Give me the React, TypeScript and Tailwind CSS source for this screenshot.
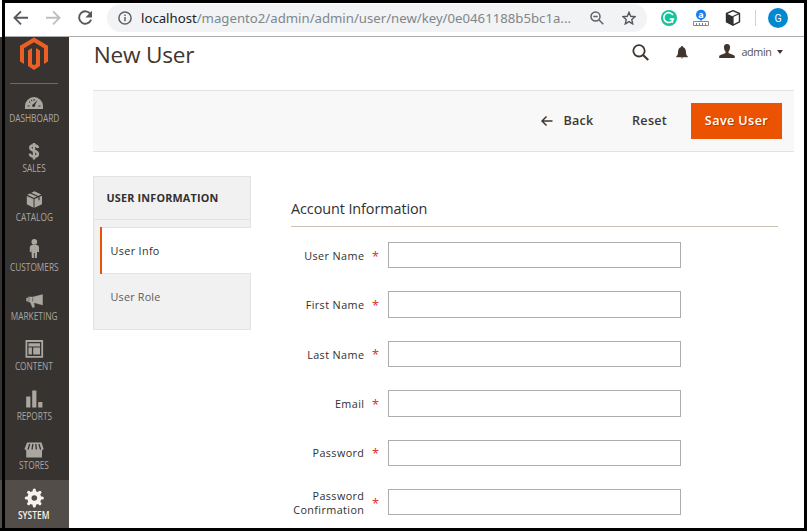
import type { ReactNode } from "react";

const sidebarItems: { label: string; icon: ReactNode; active?: boolean }[] = [
  {
    label: "DASHBOARD",
    icon: (
      <>
        <path d="M3 17v-3a9 9 0 0 1 18 0v3z" />
        <path d="M5.500 14h2M16.500 14h2M7 9.500l1.300 1.200M12 7v1.800M9.300 7.800l.6 1.400" stroke="#373330" strokeWidth="1" />
        <path d="M15.500 8l-4.500 4.500 1.500 1.500z" fill="#373330" />
        <circle cx="11.600" cy="13.500" r="1.500" fill="#373330" />
      </>
    ),
  },
  {
    label: "SALES",
    icon: (
      <path
        d="M16 6C15.600 3.900 14 3.300 12 3.300c-2.300 0-3.700.9-3.700 2.500 0 4.200 7.600 1.700 7.600 6.200 0 1.700-1.500 2.700-3.900 2.700-2.600 0-4-.9-4.200-3M12 1v16.400"
        fill="none"
        stroke="currentColor"
        strokeWidth="2.500"
      />
    ),
  },
  {
    label: "CATALOG",
    icon: (
      <>
        <path d="M4.800 4.900l6.700 3.100v8.700l-6.700-3.500zM12.500 8l7.500-3.300v8.600l-7.500 3.400zM5.300 3.700L8 2.500l6.900 3-2.900 1.400zM9.300 1.800L12.500.2l6.800 3.300-3.100 1.400z" />
        <path d="M17 6v3.300" stroke="#373330" strokeWidth="1.200" />
      </>
    ),
  },
  {
    label: "CUSTOMERS",
    icon: (
      <>
        <circle cx="12.300" cy="0.900" r="2.800" />
        <path d="M10 4.100h5q2 .4 2 2.200v4.800h-1.700V8l-.5 9h-2v-5h-.9v5h-2l-.6-9v3.100H7.800V6.300q0-1.800 2.200-2.200z" />
      </>
    ),
  },
  {
    label: "MARKETING",
    icon: (
      <path d="M21 2.900v11.700l-8.600-2.400.6 4.400-2.700.5-2.300-5.500H5.800v-1.200H4V6.700h1.800V5.500H11zM6.900 6.400v4M10.700 6.400v4" stroke="#373330" strokeWidth=".5" />
    ),
  },
  {
    label: "CONTENT",
    icon: (
      <>
        <path d="M4.400 1h15.800v15.800H4.400z" fill="none" stroke="currentColor" strokeWidth="1.800" />
        <path d="M6.500 3.200H18v3.200H6.500zM6.500 7.600h3.400v7H6.500zM11.200 7.600H18v7h-6.800z" />
      </>
    ),
  },
  { label: "REPORTS", icon: <path d="M4.200 6.500h4.200v11H4.200zM10.200.5h4.200v17h-4.200zM16.200 12h4.200v5.500h-4.200z" /> },
  {
    label: "STORES",
    icon: (
      <>
        <path d="M5 3.500h14.500l2.200 6.500-1.700 1.500v7H4.200v-7L2.500 10z" />
        <path d="M7.700 5L6 10.500M10.800 5l-.7 5.500M13.800 5l.6 5.500M16.900 5l1.700 5.500" stroke="#373330" strokeWidth="1.300" />
      </>
    ),
  },
  {
    label: "SYSTEM",
    active: true,
    icon: (
      <>
        <circle cx="12.300" cy="9" r="4.800" fill="none" stroke="currentColor" strokeWidth="4.400" />
        <path
          d="M12.300 1v16M4.300 9h16M6.700 3.400l11.200 11.200M17.900 3.400L6.700 14.600"
          stroke="currentColor"
          strokeWidth="3.200"
          strokeLinecap="round"
        />
        <circle cx="12.300" cy="9" r="2.800" fill="#524d49" />
      </>
    ),
  },
];

const fields = ["User Name", "First Name", "Last Name", "Email", "Password", "Password Confirmation"];

function BrowserBar() {
  return (
    <div className="flex h-[34px] shrink-0 items-start border-b border-[#adadad] bg-white">
      <svg className="h-[33px] w-[102px] shrink-0" viewBox="5 3 102 33" fill="none" strokeWidth="1.900">
        <path d="M28 17.800H15M21 11.300l-6.500 6.500 6.500 6.500" stroke="#55585c" />
        <path d="M46 17.800h13M53 11.300l6.500 6.500-6.500 6.500" stroke="#bcbec0" />
        <path d="M90.500 14.100a6.200 6.200 0 1 0 .6 5.600" stroke="#55585c" />
        <path d="M92 10.800v6.600h-6.600z" fill="#55585c" />
      </svg>
      <div className="mt-px flex h-7 w-[540px] shrink-0 items-center rounded-full bg-[#f1f3f4]">
        <svg className="ml-[11px] size-[14px] shrink-0" viewBox="0 0 14 14" fill="none" stroke="#5f6368" strokeWidth="1.500">
          <circle cx="7" cy="7" r="6.100" />
          <path d="M7 6v4.300M7 3.500v1.500" />
        </svg>
        <span className="ml-[9px] w-[440px] whitespace-nowrap font-['Noto_Sans',sans-serif] text-[13.200px] leading-7 text-[#80868b]">
          <span className="text-[#202124]">localhost</span>/magento2/admin/admin/user/new/key/0e0461188b5bc1a...
        </span>
        <svg className="ml-[9px] size-[14px] shrink-0" viewBox="0 0 14 14" fill="none" stroke="#5f6368" strokeWidth="1.500">
          <circle cx="5.500" cy="5.500" r="4.500" />
          <path d="M8.800 8.800L13.300 13.300M3.300 5.500h4.400" />
        </svg>
        <svg className="ml-[18px] size-[14px] shrink-0" viewBox="0 0 14 14" fill="none" stroke="#55585c" strokeWidth="1.400">
          <path d="M7 1.300l1.700 4 4.300.4-3.200 2.900.9 4.300L7 10.600l-3.700 2.300.9-4.300L1 5.700l4.300-.4z" />
        </svg>
      </div>
      <svg className="h-[33px] w-[157px] shrink-0" viewBox="647 3 157 33" fill="none">
        <circle cx="669" cy="18" r="8" fill="#15c39a" />
        <path d="M673 15.200a4.900 4.900 0 1 0 .4 3.800h-3.700" stroke="#fff" strokeWidth="1.600" />
        <path d="M672.500 18.800v4" stroke="#fff" strokeWidth="1.400" />
        <circle cx="701" cy="14.800" r="5" fill="#1a7cf0" />
        <path d="M699.300 18.500h3.400L701 21.200z" fill="#1a7cf0" />
        <text x="701" y="17.600" textAnchor="middle" fontSize="9" fontWeight="700" fill="#fff" fontFamily="Open Sans">a</text>
        <path d="M693.500 21.500h15v4h-15zM696.500 23v2M699.500 23v2M702.500 23v2M705.500 23v2" stroke="#85888b" strokeWidth="1" />
        <path d="M733 10.700l6.500 2.800v8.400L733 25.200l-6.500-3.300v-8.400z" fill="#fff" stroke="#303030" strokeWidth="1.400" strokeLinejoin="round" />
        <path d="M726.500 13.500L733 16.500v8.700l-6.500-3.300z" fill="#303030" />
        <path d="M733 16.500l6.500-3M733 16.500v8.700" stroke="#303030" strokeWidth="1.200" />
        <path d="M755.500 10v16" stroke="#cfd1d4" />
        <circle cx="778" cy="18" r="10" fill="#0288d1" />
        <text x="778" y="21.800" textAnchor="middle" fontSize="10.500" fill="#fff" fontFamily="Roboto">G</text>
      </svg>
    </div>
  );
}

function Sidebar() {
  return (
    <nav className="flex w-16 shrink-0 flex-col overflow-hidden bg-[#373330]">
      <div className="h-[46.200px] shrink-0">
        <svg className="block h-[34px] w-16" viewBox="5 37 64 34" fill="#eb5f24">
          <path d="M34 37.400l14 8.300v15.900l-4 2.400V48.200l-10-6-10 6V64l-4-2.400V45.700zM28 50.500l4-2.500v16l2 1.200 2-1.200V48l4 2.500v15.600L34 70l-6-3.900z" />
        </svg>
        <div className="ml-[5px] mt-[12px] h-px w-12 bg-[#736963]" />
      </div>
      {sidebarItems.map((item) => (
        <a
          key={item.label}
          className={
            item.active
              ? "flex h-[49.600px] shrink-0 flex-col items-center bg-[#524d49] pt-[9px] text-[#f7f3eb]"
              : "flex h-[49.600px] shrink-0 flex-col items-center pt-[9px] text-[#aaa6a0]"
          }
        >
          <svg className="mr-[6px] h-5 w-6 shrink-0 overflow-visible" viewBox="0 0 24 20" fill="currentColor">
            {item.icon}
          </svg>
          <span
            className={
              item.active
                ? "-mt-[0.200px] mr-[6px] scale-x-[0.840] font-['Open_Sans',sans-serif] text-[10px] font-semibold leading-[12px]"
                : "-mt-[0.200px] mr-[5.500px] scale-x-[0.830] font-['Open_Sans',sans-serif] text-[10px] leading-[12px]"
            }
          >
            {item.label}
          </span>
        </a>
      ))}
    </nav>
  );
}

function PageHeader() {
  return (
    <header className="flex h-[53px] shrink-0 items-start">
      <h1 className="w-[539px] pl-[0.700px] text-[22.600px] leading-[36px] tracking-[-0.200px] text-[#41362f]">New User</h1>
      <svg className="mt-[7px] size-[17px]" viewBox="0 0 17 17" fill="none" stroke="#41362f" strokeWidth="1.800">
        <circle cx="7" cy="6.800" r="5.700" />
        <path d="M11 11l5.300 5" strokeWidth="2.200" />
      </svg>
      <svg className="ml-[27px] mt-[8px] h-[15px] w-3" viewBox="0 0 12 15" fill="#41362f">
        <path d="M5.200 1h1.600v1C9 2.500 10 4.500 10 7.500c0 2 .7 3 1.800 4v.8H.2v-.8C1.300 10.500 2 9.500 2 7.500c0-3 1-5 3.200-5.500zM4.700 12.800h2.600q-1.300 1.500-2.600 0z" />
      </svg>
      <svg className="ml-[31px] mt-[7px] h-[15px] w-4" viewBox="0 0 16 15" fill="#41362f">
        <path d="M8 0c2.600 0 3.300 2 3 4-.2 1.800-.9 3-1.500 3.600V9c2 1.300 6 1.600 6.300 3.500V14H.2v-1.500C.5 10.600 4.500 10.300 6.500 9V7.600C5.900 7 5.200 5.800 5 4c-.3-2 .4-4 3-4z" />
      </svg>
      <span className="ml-[6.500px] mt-[7px] w-[35.500px] whitespace-nowrap text-[10.800px] leading-4 tracking-[-0.400px] text-[#5a5049]">admin</span>
      <svg className="mt-[13px] h-[5px] w-[6px]" viewBox="0 0 6 5" fill="#41362f">
        <path d="M0 0h6L3 4z" />
      </svg>
    </header>
  );
}

function Toolbar() {
  return (
    <div className="flex h-[62px] w-[701px] shrink-0 items-center justify-end border-y border-[#e3e3e3] bg-[#f8f8f8] pr-3 text-[12.600px] font-semibold tracking-[0.250px] text-[#41362f]">
      <svg className="mr-[10.500px] h-3 w-3" viewBox="0 0 12 12" fill="none" stroke="#41362f" strokeWidth="1.500">
        <path d="M11.500 6H1M5.500 1.500L1 6l4.500 4.500" />
      </svg>
      <span>Back</span>
      <span className="ml-[38.500px]">Reset</span>
      <button className="ml-[24px] h-9 w-[91px] bg-[#eb5202] tracking-[0.400px] text-white [text-shadow:1px_1px_0_rgba(0,0,0,0.250)]">
        Save User
      </button>
    </div>
  );
}

function Tabs() {
  return (
    <aside className="flex h-[154px] w-[158px] shrink-0 flex-col border-y border-l border-[#e3e3e3] bg-[#f1f1f1] text-[10.800px] tracking-[0.300px]">
      <div className="h-[43px] shrink-0 border-b border-r border-[#e3e3e3] pl-[12.500px] font-bold leading-[42px] tracking-[0.190px] text-[#303030]">
        USER INFORMATION
      </div>
      <div className="h-[7px] shrink-0 border-r border-[#e3e3e3]" />
      <div className="ml-[6px] flex h-[47px] shrink-0 border-l-2 border-[#eb5202] bg-white">
        <div className="flex-1 border-y border-[#e3e3e3] pl-[8.500px] leading-[45px] tracking-[0.350px] text-[#303030]">User Info</div>
      </div>
      <div className="flex-1 border-r border-[#e3e3e3] pl-[16.500px] leading-[45px] tracking-[0.200px] text-[#5c5c5c]">User Role</div>
    </aside>
  );
}

function AccountForm() {
  return (
    <form className="ml-[40px] w-[487px]">
      <h2 className="h-[51px] border-b border-[#cac3b4] pt-[22px] text-[14.400px] leading-[22px] tracking-[-0.080px] text-[#303030]">Account Information</h2>
      <div className="flex flex-col gap-[23px] pt-[15px]">
        {fields.map((name) => (
          <label key={name} className="flex h-[26.400px] items-center text-[10.800px] leading-[14px] text-[#303030]">
            <span className="w-[73.400px] pt-[1.400px] text-right tracking-[0.400px]">{name}</span>
            <span className="ml-[7.600px] w-[16px] pt-[3px] text-[12.600px] text-[#e22626]">*</span>
            <input aria-label={name} className="h-[26.400px] w-[293px] border border-[#adadad] bg-white outline-none" />
          </label>
        ))}
      </div>
    </form>
  );
}

export default function App() {
  return (
    <div className="flex h-[531px] w-[807px] overflow-hidden bg-black font-['Open_Sans','Noto_Sans',sans-serif]">
      <div className="flex w-[2px] shrink-0 flex-col">
        <div className="h-[37px] bg-white" />
        <div className="h-[443px] bg-[#373330]" />
        <div className="h-[48px] bg-[#524d49]" />
      </div>
      <div className="my-[3px] ml-[3px] flex w-[799px] shrink-0 flex-col overflow-hidden bg-white">
        <BrowserBar />
        <div className="flex min-h-0 flex-1">
          <Sidebar />
          <main className="flex min-w-0 flex-1 flex-col overflow-hidden pl-6">
            <PageHeader />
            <Toolbar />
            <div className="flex pt-6">
              <Tabs />
              <AccountForm />
            </div>
          </main>
        </div>
      </div>
    </div>
  );
}
